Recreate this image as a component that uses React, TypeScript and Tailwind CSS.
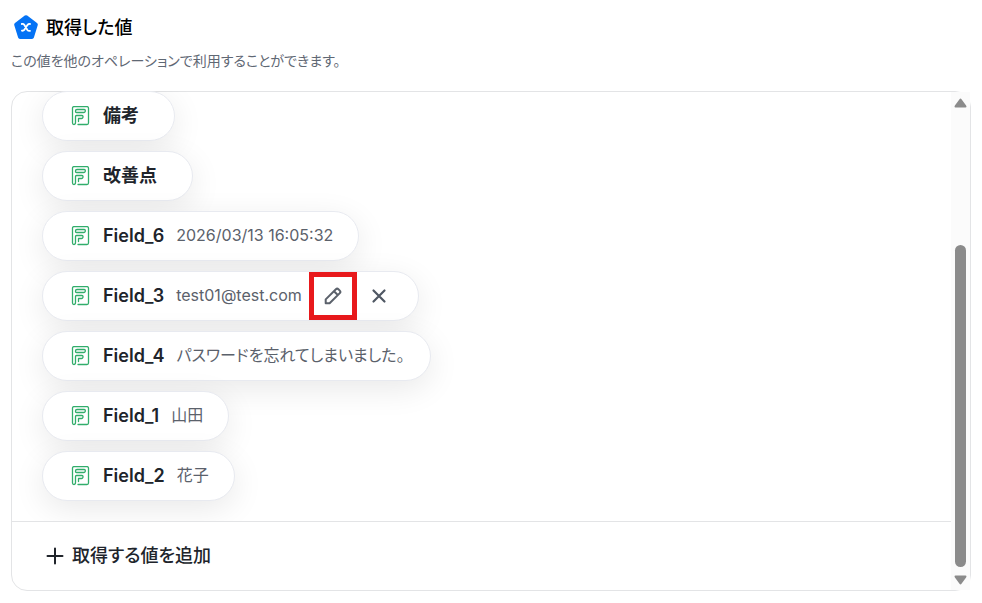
import { Fragment } from 'react';

interface FieldItem {
  label: string;
  value?: string;
  editable?: boolean;
}

const fields: FieldItem[] = [
  { label: '備考' },
  { label: '改善点' },
  { label: 'Field_6', value: '2026/03/13 16:05:32' },
  { label: 'Field_3', value: 'test01@test.com', editable: true },
  { label: 'Field_4', value: 'パスワードを忘れてしまいました。' },
  { label: 'Field_1', value: '山田' },
  { label: 'Field_2', value: '花子' },
];

function LogoIcon() {
  return (
    <svg className="h-6 w-6 shrink-0" viewBox="0 0 24 24" fill="none" aria-hidden="true">
      <path
        d="M12 2.2 21.8 9.6 18 21.9H6L2.2 9.6Z"
        fill="#0573f5"
        stroke="#0573f5"
        strokeWidth="4"
        strokeLinejoin="round"
      />
      <path
        d="M7.8 9c1.300-.2 2 .1 2.600 1l3 4.900c.6.9 1.300 1.200 2.600 1M16 9c-1.200-.2-1.900.2-2.600 1.100l-2.900 4.500c-.7.9-1.400 1.300-2.600 1.100"
        stroke="#fff"
        strokeWidth="1.8"
        strokeLinecap="round"
      />
    </svg>
  );
}

function FormIcon() {
  return (
    <svg
      className="h-5 w-5 shrink-0"
      viewBox="0 0 20 20"
      fill="none"
      stroke="#31ad6b"
      strokeWidth="1.3"
      strokeLinejoin="round"
      strokeLinecap="round"
      aria-hidden="true"
    >
      <path d="M7 18.500h9a1.500 1.500 0 0 0 1.500-1.500V2.100A1.500 1.500 0 0 0 16 .6H3a1.500 1.500 0 0 0-1.500 1.500V17A1.500 1.500 0 0 0 3 18.500c1.200 0 1.500-.8 1.500-1.900V10.500a1 1 0 0 1 1-1h5.500a1 1 0 0 1 1 1v.5a1.500 1.500 0 0 1-1.500 1.500H7.500v3" />
      <path d="M6.500 3.500h6.800a1 1 0 0 1 1 1v.5a1.500 1.500 0 0 1-1.500 1.500H5.500a1 1 0 0 1-1-1V5a1.500 1.500 0 0 1 1.500-1.500Z" />
    </svg>
  );
}

function PencilIcon() {
  return (
    <svg
      className="h-5 w-5"
      viewBox="0 0 20 20"
      fill="none"
      stroke="currentColor"
      strokeWidth="2"
      strokeLinejoin="round"
      aria-hidden="true"
    >
      <path d="M2.700 17.300V13.400L12.900 3.200a1.800 1.800 0 0 1 2.500 0l1.400 1.400a1.800 1.800 0 0 1 0 2.500L6.600 17.300ZM11 5.200l3.800 3.800" />
    </svg>
  );
}

function CloseIcon() {
  return (
    <svg className="h-5 w-5" viewBox="0 0 20 20" stroke="currentColor" strokeWidth="2.2" strokeLinecap="round" aria-hidden="true">
      <path d="m4.500 4.500 11 11M15.500 4.500l-11 11" />
    </svg>
  );
}

function FieldPill({ label, value, editable = false }: FieldItem) {
  return (
    <li className="flex h-[50px] items-center rounded-full border border-[#e8eaf0] bg-white pr-[25px] pl-7 shadow-[0_8px_32px_rgba(0,0,0,0.09)]">
      <FormIcon />
      <span className="ml-3 pr-[10px] pb-0.5 text-[18px] font-semibold text-[#20242b]">{label}</span>
      {value && <span className="ml-0.5 pb-0.5 text-[16px] text-[#5b616b]">{value}</span>}
      {editable && (
        <Fragment>
          <button
            type="button"
            aria-label="編集"
            className="ml-[7px] flex h-12 w-12 items-center justify-center border-[5px] border-[#e8191c] text-[#5b616b]"
          >
            <PencilIcon />
          </button>
          <button type="button" aria-label="削除" className="mr-1 ml-3 text-[#4f5763]">
            <CloseIcon />
          </button>
        </Fragment>
      )}
    </li>
  );
}

function Scrollbar() {
  return (
    <div className="flex w-[19px] shrink-0 flex-col items-center bg-[#fbfbfb] pt-[6px] pb-[5px]" aria-hidden="true">
      <svg className="h-[10px] w-[13px]" viewBox="0 0 13 10" fill="#8b8b8b">
        <path d="M5.500 1.200Q6.500-.2 7.500 1.200L12.100 7.600Q13.100 9.500 11.500 9.500H1.500Q-.1 9.500.9 7.600Z" />
      </svg>
      <div className="min-h-[137px] flex-1" />
      <div className="h-[322px] w-[11px] rounded-full bg-[#8b8b8b]" />
      <svg className="mt-2 h-[10px] w-[13px]" viewBox="0 0 13 10" fill="#8b8b8b">
        <path d="M5.500 8.800Q6.500 10.200 7.500 8.800L12.100 2.400Q13.100.5 11.500.5H1.500Q-.1.5.9 2.400Z" />
      </svg>
    </div>
  );
}

export default function App() {
  return (
    <main className="bg-white px-[11px] pt-[11px] pb-3 font-[Inter,'Noto_Sans_CJK_JP',sans-serif] [font-feature-settings:'palt']">
      <header>
        <div className="flex h-8 items-center gap-2 pl-[3px]">
          <LogoIcon />
          <h1 className="text-[18px] font-medium text-black">取得した値</h1>
        </div>
        <p className="mt-2 text-[14px] leading-5 text-[#5f6874]">この値を他のオペレーションで利用することができます。</p>
      </header>

      <section className="mt-5 flex rounded-2xl border border-[#e3e4e6]">
        <div className="min-w-0 flex-1">
          <ul className="-mt-px flex flex-col items-start gap-[10px] overflow-hidden rounded-tl-2xl pb-5 pl-[30px]">
            {fields.map((field) => (
              <FieldPill key={field.label} {...field} />
            ))}
          </ul>
          <div className="border-t border-[#e3e4e6]">
            <button type="button" className="flex h-[68px] items-center gap-2 pl-[34px] text-[18px] font-medium text-[#20242b]">
              <svg className="h-[18px] w-[18px]" viewBox="0 0 18 18" stroke="currentColor" strokeWidth="2" strokeLinecap="round" aria-hidden="true">
                <path d="M9 1.500v15M1.500 9h15" />
              </svg>
              <span className="pb-0.5">取得する値を追加</span>
            </button>
          </div>
        </div>
        <Scrollbar />
      </section>
    </main>
  );
}
